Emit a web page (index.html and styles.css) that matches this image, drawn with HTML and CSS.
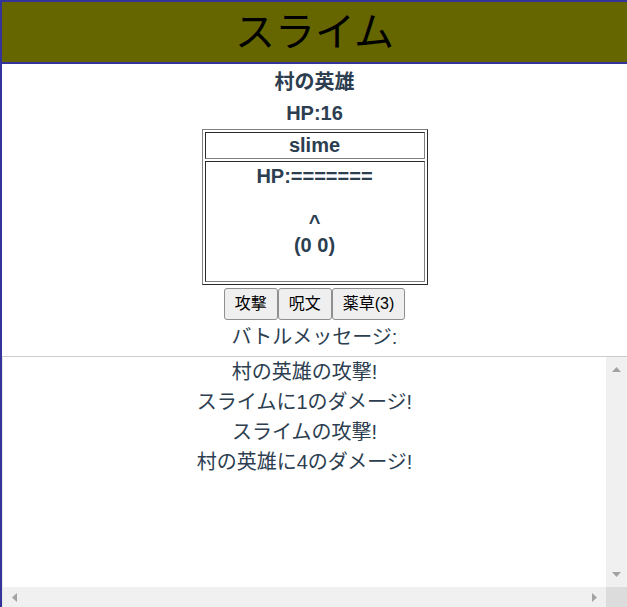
FILE: index.html
```html
<!DOCTYPE html>
<html lang="ja">
<head>
  <meta charset="UTF-8" />
  <meta name="viewport" content="width=device-width, initial-scale=1" />
  <title>スライム</title>
  <link rel="stylesheet" href="styles.css">
</head>
<body>
  <div class="app">
    <div class="title-bar">スライム</div>
    <div class="hero-name">村の英雄</div>
    <div class="hero-hp">HP:16</div>

    <table class="enemy">
      <tr><td class="enemy-name">slime</td></tr>
      <tr>
        <td class="enemy-body">
          <div class="enemy-art">HP:=======<br><br>^<br>(0 0)</div>
        </td>
      </tr>
    </table>

    <div class="commands"><button>攻撃</button><button>呪文</button><button>薬草(3)</button></div>

    <div class="log-label">バトルメッセージ:</div>
    <div class="log">
      <div class="log-lines">
        <div>村の英雄の攻撃!</div>
        <div>スライムに1のダメージ!</div>
        <div>スライムの攻撃!</div>
        <div>村の英雄に4のダメージ!</div>
      </div>
      <!-- scrollbars (disabled look) -->
      <div class="vbar">
        <svg width="9" height="5" viewBox="0 0 9 5"><path d="M0 5L4.5 0L9 5Z" fill="#a3a3a3"/></svg>
        <svg width="9" height="5" viewBox="0 0 9 5"><path d="M0 0L4.5 5L9 0Z" fill="#a3a3a3"/></svg>
      </div>
      <div class="hbar">
        <svg width="5" height="9" viewBox="0 0 5 9"><path d="M5 0L0 4.5L5 9Z" fill="#a3a3a3"/></svg>
        <svg width="5" height="9" viewBox="0 0 5 9"><path d="M0 0L5 4.5L0 9Z" fill="#a3a3a3"/></svg>
      </div>
      <div class="corner"></div>
    </div>
  </div>
</body>
</html>
```

FILE: styles.css
```css
* {
  margin: 0; padding: 0; box-sizing: border-box;
}
body {
  font-family: "Liberation Sans", "Noto Sans CJK JP", sans-serif;
  overflow: hidden;
}
.app {
  height: 607px;
  border-top: 2px solid #333399;
  border-left: 2px solid #333399;
  text-align: center;
  color: #2c3e50;
}
.title-bar {
  height: 62px;
  background-color: #666600;
  border-bottom: 2px solid #333399;
  color: #000;
  font-size: 40px;
  line-height: 60px;
}
.hero-name {
  margin-top: 7px;
  font-size: 20px;
  font-weight: bold;
  line-height: 23px;
}
.hero-hp {
  margin-top: 8px;
  font-size: 20px;
  font-weight: bold;
  line-height: 23px;
}

.enemy {
  width: 226px;
  margin: 4px auto 0;
  border: 1px outset gray;
  border-spacing: 2px;
  font-size: 20px;
  font-weight: bold;
  line-height: 23px;
}
.enemy td {
  border: 1px inset gray;
  padding: 1px;
}
.enemy-art {
  height: 117px;
  padding-top: 2px;
}

.commands {
  display: flex;
  justify-content: center;
  margin-top: 3px;
}
.commands button {
  font-family: "Liberation Sans", "Noto Sans CJK JP", sans-serif;
  font-size: 16px;
  line-height: 20px;
  padding: 5px 10px;
  color: #000;
  background-color: #efefef;
  border: 1px solid #8f8f8f;
  border-radius: 3px;
}

.log-label {
  margin-top: 6px;
  font-size: 20px;
  line-height: 23px;
}
.log {
  margin-top: 7px;
  height: 252px;
  border-top: 1px solid #cccccc;
  border-left: 1px solid #e6e6e6;
  display: grid;
  grid-template-columns: 1fr 21px;
  grid-template-rows: 1fr 21px;
  font-size: 20px;
  line-height: 30px;
}
.log-lines {
  overflow: hidden;
}
.vbar {
  background-color: #f0f0f0;
  display: flex;
  flex-direction: column;
  justify-content: space-between;
  align-items: center;
  padding: 10px 0;
}
.hbar {
  background-color: #f0f0f0;
  display: flex;
  justify-content: space-between;
  align-items: center;
  padding: 0 9px;
}
.vbar svg, .hbar svg {
  display: block;
}
.corner {
  background-color: #dcdcdc;
}
```
